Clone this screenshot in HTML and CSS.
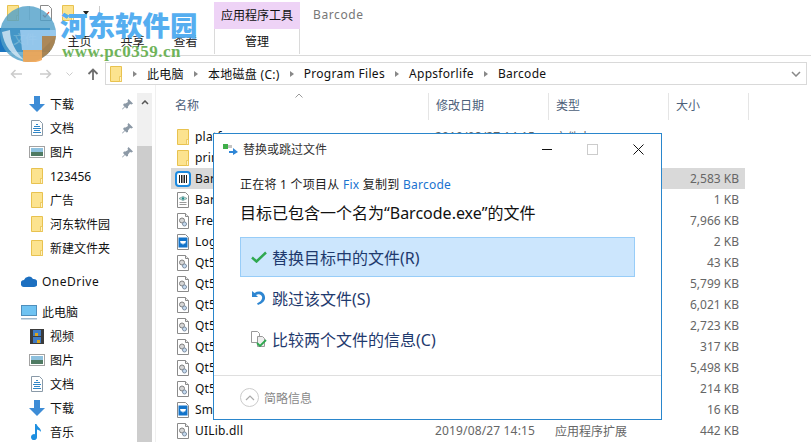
FILE: index.html
```html
<!DOCTYPE html>
<html lang="zh-CN">
<head>
  <meta charset="UTF-8" />
  <title>Barcode</title>
  <link rel="stylesheet" href="styles.css">
</head>
<body>
  <svg width="0" height="0" class="defs">
    <symbol id="folder" viewBox="0 0 12 16">
      <path d="M.5.500h11v15H.5z" fill="#fce38f" stroke="#e8c24f"/>
      <path d="M9.500 15.500V10.500h2v5z" fill="#fff3c4" stroke="#e8c24f" stroke-width=".8"/>
    </symbol>
    <symbol id="dll" viewBox="0 0 12 16">
      <path d="M.5.500h8l3 3v12H.5z" fill="#fff" stroke="#8a8a8a"/>
      <path d="M8.500.500v3h3" fill="#eee" stroke="#8a8a8a"/>
      <circle cx="5" cy="7.500" r="2.500" fill="#d6d6d6" stroke="#808080"/>
      <circle cx="7.500" cy="11" r="2" fill="#c6dcf2" stroke="#7d8da0"/>
    </symbol>
    <symbol id="pic" viewBox="0 0 12 16">
      <path d="M.5.500h8l3 3v12H.5z" fill="#fff" stroke="#8a8a8a"/>
      <rect x="1.500" y="3.500" width="9" height="10" fill="#1273c9"/>
      <path d="M3 7h6l-1 3-1-1-1 2-1-2-1 1z" fill="#fff"/>
    </symbol>
    <symbol id="cfg" viewBox="0 0 12 16">
      <path d="M.5.500h8l3 3v12H.5z" fill="#fff" stroke="#8a8a8a"/>
      <path d="M2 6.500l4-2 4 2-4 2z" fill="#d5e8e5" stroke="#5c8f8c" stroke-width=".7"/>
      <circle cx="6" cy="6.500" r="1.200" fill="#1f8a88"/>
      <path d="M2.500 10.500h7M2.500 12.500h7" stroke="#9a9a9a"/>
    </symbol>
    <symbol id="down" viewBox="0 0 16 16">
      <path d="M5 0h6v8h5l-8 8-8-8h5z" fill="#3d8cd6"/>
    </symbol>
    <symbol id="doc" viewBox="0 0 12 16">
      <path d="M.5.500h8l3 3v12H.5z" fill="#fff" stroke="#8a9aa8"/>
      <path d="M5 4.500h2M3 6.500h6M2 8.500h8M3 10.500h6M2 12.500h8" stroke="#2f86c8"/>
    </symbol>
    <symbol id="image" viewBox="0 0 16 12">
      <rect x=".5" y=".5" width="15" height="11" fill="#fff" stroke="#a2a2a2"/>
      <rect x="2" y="2" width="12" height="4" fill="#8ec1de"/>
      <rect x="2" y="6" width="12" height="4" fill="#4f7a62"/>
    </symbol>
    <symbol id="pin" viewBox="0 0 11 11">
      <path d="M6.500 0L11 4.500 9.500 5.500 8 5 6 7.500 6 9 4.500 9.500 3 8 .5 10.500 0 10 2.500 7.500 1 6 2 4.500 3.500 4.500 6 3 5.500 1.500z" fill="#8c99a6"/>
    </symbol>
  </svg>

  <div class="ribbon">
    <div class="quick">
      <svg width="12" height="16"><use href="#folder"/></svg>
      <span class="q-sep"></span>
      <svg width="12" height="16" viewBox="0 0 12 16"><path d="M.5.500h8l3 3v12H.5z" fill="#fff" stroke="#8a8a8a"/><path d="M3 10l2 2 4-5" fill="none" stroke="#d8503c" stroke-width="1.200"/></svg>
      <svg width="12" height="16"><use href="#folder"/></svg>
      <span class="q-caret"></span>
      <span class="q-sep"></span>
    </div>
    <div class="tabs">
      <div class="tab tab-file">文件</div>
      <div class="tab">主页</div>
      <div class="tab">共享</div>
      <div class="tab">查看</div>
      <div class="tool-group">
        <div class="tool-title">应用程序工具</div>
        <div class="tool-tab">管理</div>
      </div>
      <div class="window-title">Barcode</div>
    </div>
  </div>

  <div class="address-row">
    <div class="nav-buttons">
      <svg width="12" height="10" viewBox="0 0 12 10"><path d="M12 5H1.500M5.500 1L1.500 5l4 4" fill="none" stroke="#cbcbcb" stroke-width="1.500"/></svg>
      <svg width="12" height="10" viewBox="0 0 12 10"><path d="M0 5h10.500M6.500 1l4 4-4 4" fill="none" stroke="#cbcbcb" stroke-width="1.500"/></svg>
      <svg width="7" height="4" viewBox="0 0 7 4"><path d="M.5.500l3 3 3-3" fill="none" stroke="#cbcbcb"/></svg>
      <svg width="12" height="12" viewBox="0 0 12 12"><path d="M6 12V1.500M1.500 6L6 1.500 10.500 6" fill="none" stroke="#6e6e6e" stroke-width="1.800"/></svg>
    </div>
    <div class="address">
      <svg width="12" height="16"><use href="#folder"/></svg>
      <span class="crumb-sep first"></span><span class="crumb">此电脑</span>
      <span class="crumb-sep"></span><span class="crumb">本地磁盘 (C:)</span>
      <span class="crumb-sep"></span><span class="crumb">Program Files</span>
      <span class="crumb-sep"></span><span class="crumb">Appsforlife</span>
      <span class="crumb-sep"></span><span class="crumb">Barcode</span>
      <svg class="address-drop" width="10" height="6" viewBox="0 0 10 6"><path d="M1 1l4 4 4-4" fill="none" stroke="#888" stroke-width="1.500"/></svg>
    </div>
  </div>

  <div class="main">
    <nav class="sidebar">
      <div class="nav-list">
        <div class="nav-item"><span class="nav-ico"><svg width="16" height="16"><use href="#down"/></svg></span><span>下载</span><svg class="pin" width="11" height="11"><use href="#pin"/></svg></div>
        <div class="nav-item"><span class="nav-ico"><svg width="12" height="16"><use href="#doc"/></svg></span><span>文档</span><svg class="pin" width="11" height="11"><use href="#pin"/></svg></div>
        <div class="nav-item"><span class="nav-ico"><svg width="16" height="12"><use href="#image"/></svg></span><span>图片</span><svg class="pin" width="11" height="11"><use href="#pin"/></svg></div>
        <div class="nav-item"><span class="nav-ico"><svg width="12" height="16"><use href="#folder"/></svg></span><span>123456</span></div>
        <div class="nav-item"><span class="nav-ico"><svg width="12" height="16"><use href="#folder"/></svg></span><span>广告</span></div>
        <div class="nav-item"><span class="nav-ico"><svg width="12" height="16"><use href="#folder"/></svg></span><span>河东软件园</span></div>
        <div class="nav-item"><span class="nav-ico"><svg width="12" height="16"><use href="#folder"/></svg></span><span>新建文件夹</span></div>
        <div class="nav-item nav-top nav-drive">
          <span class="nav-ico"><svg width="16" height="11" viewBox="0 0 16 11"><path d="M3.500 11A3.500 3.500 0 0 1 3 4a5 5 0 0 1 9-1 4 4 0 0 1 1 8z" fill="#1c6fc0"/></svg></span>
          <span>OneDrive</span>
        </div>
        <div class="nav-item nav-top nav-pc">
          <span class="nav-ico"><svg width="16" height="15" viewBox="0 0 16 15"><rect x=".5" y=".5" width="15" height="10" fill="#6fc3f2" stroke="#4f8fbc"/><path d="M0 13h16v1.500H0z" fill="#9fb8cc"/></svg></span>
          <span>此电脑</span>
        </div>
        <div class="nav-item"><span class="nav-ico"><svg width="14" height="15" viewBox="0 0 14 15"><rect width="14" height="15" fill="#3b3b3b"/><rect x="3" y="1" width="8" height="6" fill="#3f7bc4"/><rect x="3" y="8" width="8" height="6" fill="#3f7bc4"/><path d="M5 4h3v3H5zM7 11h3v3H7z" fill="#d9a520"/></svg></span><span>视频</span></div>
        <div class="nav-item"><span class="nav-ico"><svg width="16" height="12"><use href="#image"/></svg></span><span>图片</span></div>
        <div class="nav-item"><span class="nav-ico"><svg width="12" height="16"><use href="#doc"/></svg></span><span>文档</span></div>
        <div class="nav-item"><span class="nav-ico"><svg width="16" height="16"><use href="#down"/></svg></span><span>下载</span></div>
        <div class="nav-item"><span class="nav-ico"><svg width="12" height="16" viewBox="0 0 12 16"><path d="M4 0h1.500c.5 3 5 4 4.500 8-1-1.500-2-2-4-2.500V13a3 3 0 1 1-2-2.700z" fill="#1e8fe0"/></svg></span><span>音乐</span></div>
      </div>
      <div class="scrollbar">
        <div class="scroll-up"><svg width="8" height="5" viewBox="0 0 8 5"><path d="M1 4l3-3 3 3" fill="none" stroke="#555" stroke-width="1.500"/></svg></div>
        <div class="scroll-thumb"></div>
      </div>
    </nav>

    <section class="files">
      <div class="sort-mark"><svg width="8" height="5" viewBox="0 0 8 5"><path d="M.5 4.500L4 1l3.500 3.500" fill="none" stroke="#9a9a9a"/></svg></div>
      <div class="file-head">
        <div class="col col-name">名称</div>
        <div class="col col-date">修改日期</div>
        <div class="col col-type">类型</div>
        <div class="col col-size">大小</div>
      </div>
      <div class="file-list">
        <div class="file"><svg class="file-ico" width="12" height="16"><use href="#folder"/></svg><span class="f-name">platforms</span><span class="f-date">2019/08/27 14:15</span><span class="f-type">文件夹</span><span class="f-size"></span></div>
        <div class="file"><svg class="file-ico" width="12" height="16"><use href="#folder"/></svg><span class="f-name">printsupport</span><span class="f-date"></span><span class="f-type"></span><span class="f-size"></span></div>
        <div class="file selected"><svg class="file-ico" width="16" height="16" viewBox="0 0 16 16"><rect x="1" y="1" width="14" height="14" rx="3" fill="#fff" stroke="#1b8ae0" stroke-width="2"/><path d="M4.500 4v8M6.500 4v8M8 4v8M9.500 4v8M11.500 4v8" stroke="#222"/></svg><span class="f-name">Barcode.exe</span><span class="f-date"></span><span class="f-type"></span><span class="f-size">2,583 KB</span></div>
        <div class="file"><svg class="file-ico" width="12" height="16"><use href="#cfg"/></svg><span class="f-name">Barcode.ini</span><span class="f-date"></span><span class="f-type"></span><span class="f-size">1 KB</span></div>
        <div class="file"><svg class="file-ico" width="12" height="16"><use href="#dll"/></svg><span class="f-name">FreeImage.dll</span><span class="f-date"></span><span class="f-type"></span><span class="f-size">7,966 KB</span></div>
        <div class="file"><svg class="file-ico" width="12" height="16"><use href="#pic"/></svg><span class="f-name">Logo.ico</span><span class="f-date"></span><span class="f-type"></span><span class="f-size">2 KB</span></div>
        <div class="file"><svg class="file-ico" width="12" height="16"><use href="#dll"/></svg><span class="f-name">Qt5Core.dll</span><span class="f-date"></span><span class="f-type"></span><span class="f-size">43 KB</span></div>
        <div class="file"><svg class="file-ico" width="12" height="16"><use href="#dll"/></svg><span class="f-name">Qt5Gui.dll</span><span class="f-date"></span><span class="f-type"></span><span class="f-size">5,799 KB</span></div>
        <div class="file"><svg class="file-ico" width="12" height="16"><use href="#dll"/></svg><span class="f-name">Qt5Net.dll</span><span class="f-date"></span><span class="f-type"></span><span class="f-size">6,021 KB</span></div>
        <div class="file"><svg class="file-ico" width="12" height="16"><use href="#dll"/></svg><span class="f-name">Qt5Pdf.dll</span><span class="f-date"></span><span class="f-type"></span><span class="f-size">2,723 KB</span></div>
        <div class="file"><svg class="file-ico" width="12" height="16"><use href="#dll"/></svg><span class="f-name">Qt5Svg.dll</span><span class="f-date"></span><span class="f-type"></span><span class="f-size">317 KB</span></div>
        <div class="file"><svg class="file-ico" width="12" height="16"><use href="#dll"/></svg><span class="f-name">Qt5Wid.dll</span><span class="f-date"></span><span class="f-type"></span><span class="f-size">5,498 KB</span></div>
        <div class="file"><svg class="file-ico" width="12" height="16"><use href="#dll"/></svg><span class="f-name">Qt5Xml.dll</span><span class="f-date"></span><span class="f-type"></span><span class="f-size">214 KB</span></div>
        <div class="file"><svg class="file-ico" width="12" height="16"><use href="#pic"/></svg><span class="f-name">Small.ico</span><span class="f-date"></span><span class="f-type"></span><span class="f-size">16 KB</span></div>
        <div class="file"><svg class="file-ico" width="12" height="16"><use href="#dll"/></svg><span class="f-name">UILib.dll</span><span class="f-date">2019/08/27 14:15</span><span class="f-type">应用程序扩展</span><span class="f-size">442 KB</span></div>
      </div>
    </section>
  </div>

  <!-- Replace dialog -->
  <div class="dialog">
    <div class="dialog-title">
      <svg class="dialog-ico" width="15" height="12" viewBox="0 0 15 12"><rect y="1" width="5" height="5" fill="#3fae49"/><rect x="5" y="2" width="4" height="3" fill="#c4c4c4"/><path d="M6 8h4V5l5 4-5 3v-2H6z" fill="#2f86d6"/></svg>
      <span class="dialog-caption">替换或跳过文件</span>
      <div class="win-buttons">
        <span class="win-min"></span>
        <span class="win-max"></span>
        <svg width="11" height="11" viewBox="0 0 11 11"><path d="M.5.5l10 10M10.500.5l-10 10" stroke="#111"/></svg>
      </div>
    </div>
    <div class="dialog-body">
      <p class="status">正在将 1 个项目从 <a>Fix</a> 复制到 <a>Barcode</a></p>
      <p class="headline">目标已包含一个名为“Barcode.exe”的文件</p>
      <div class="choice active">
        <svg width="16" height="12" viewBox="0 0 16 12"><path d="M1 6.500l4.500 4L15 1.500" fill="none" stroke="#2fa84f" stroke-width="2.500"/></svg>
        <span>替换目标中的文件(R)</span>
      </div>
      <div class="choice">
        <svg width="16" height="16" viewBox="0 0 16 16"><path d="M1 1v6h6L5 5c3-2 7 0 6 3.500-.5 2-2 3.500-5 5l1 1.500c5-1.500 7.500-4.500 7-8C13.500 2 8 0 3.500 3z" fill="#2e86d1"/></svg>
        <span>跳过该文件(S)</span>
      </div>
      <div class="choice">
        <svg width="16" height="16" viewBox="0 0 16 16"><path d="M.5.500h6l2 2v9h-8z" fill="#fff" stroke="#999"/><path d="M6.500 5.500h5l2 2v8h-7z" fill="#eee" stroke="#999"/><path d="M6 12l3 3 6-6" fill="none" stroke="#2fa84f" stroke-width="1.800"/></svg>
        <span>比较两个文件的信息(C)</span>
      </div>
    </div>
    <div class="dialog-foot">
      <span class="more-btn"><svg width="10" height="6" viewBox="0 0 10 6"><path d="M1 5l4-4 4 4" fill="none" stroke="#aaa" stroke-width="1.200"/></svg></span>
      <span>简略信息</span>
    </div>
  </div>

  <!-- Site watermark -->
  <div class="watermark">
    <svg class="wm-logo" width="56" height="56" viewBox="0 0 56 56">
      <circle cx="28" cy="28" r="28" fill="#4f9fc8" opacity=".8"/>
      <path d="M20 24H56V30L42 44H22z" fill="#9ccbee" opacity=".9"/>
      <path d="M2 26c2 14 10 24 22 28-8-8-14-18-14-30z" fill="#d7e8f5" opacity=".8"/>
      <path d="M23 44H42V54A28 28 0 0 1 23 55.500z" fill="#f3a552" opacity=".9"/>
      <path d="M42 30H56A28 28 0 0 1 42 52z" fill="#b07d3e" opacity=".85"/>
    </svg>
    <div class="wm-name">河东软件园</div>
    <div class="wm-url">www.pc0359.cn</div>
  </div>
</body>
</html>
```

FILE: styles.css
```css
html, body {
  margin: 0;
  padding: 0;
  width: 811px;
  height: 442px;
  overflow: hidden;
  background: #fff;
  color: #111;
  font-family: "Noto Sans", "Noto Sans CJK SC", sans-serif;
  font-size: 12px;
}

svg {
  display: block;
  flex: none;
}

.defs {
  position: absolute;
}

/* Ribbon */
.ribbon {
  height: 56px;
  box-sizing: border-box;
  border-bottom: 1px solid #dadada;
  position: relative;
}

.quick {
  display: flex;
  align-items: center;
  height: 26px;
  padding-left: 7px;
  gap: 10px;
}

.q-sep {
  width: 1px;
  height: 14px;
  background: #ccc;
}

.q-caret {
  width: 0;
  height: 0;
  margin-left: -1px;
  border-left: 3.500px solid transparent;
  border-right: 3.500px solid transparent;
  border-top: 4px solid #222;
}

.tabs {
  display: flex;
  position: absolute;
  left: 0;
  top: 0;
  right: 0;
  height: 55px;
  align-items: flex-end;
}

.tab {
  width: 53px;
  height: 26px;
  line-height: 26px;
  text-align: center;
  color: #222;
}

.tab-file {
  width: 50px;
  height: 24px;
  line-height: 24px;
  margin-right: 3px;
  margin-bottom: 3px;
  background: #1b75c0;
  color: #fff;
}

.tool-group {
  margin-left: 2px;
  width: 86px;
  height: 46px;
  display: flex;
  flex-direction: column;
  align-self: flex-start;
  margin-top: 2px;
}

.tool-title {
  height: 27px;
  line-height: 27px;
  text-align: center;
  background: #eed3f6;
}

.tool-tab {
  flex: 1;
  line-height: 25px;
  text-align: center;
  border-left: 1px solid #dadada;
  border-right: 1px solid #dadada;
}

.window-title {
  align-self: flex-start;
  margin: 6px 0 0 13px;
  color: #777;
  letter-spacing: .6px;
}

/* Address bar */
.address-row {
  display: flex;
  height: 23px;
  margin-top: 6px;
}

.nav-buttons {
  display: flex;
  align-items: center;
  width: 105px;
  padding-left: 10px;
  box-sizing: border-box;
}

.nav-buttons svg:nth-child(1) {
  margin-right: 18px;
}

.nav-buttons svg:nth-child(2) {
  margin-right: 14px;
}

.nav-buttons svg:nth-child(3) {
  margin-right: 14px;
}

.address {
  flex: 1;
  margin-right: 4px;
  border: 1px solid #d9d9d9;
  display: flex;
  align-items: center;
  padding-left: 4px;
  position: relative;
  letter-spacing: .3px;
}

.crumb {
  color: #111;
}

.crumb-sep {
  width: 0;
  height: 0;
  margin: 0 10px 0 10px;
  border: 3px solid transparent;
  border-left: 4px solid #888;
  border-right: 0;
}

.crumb-sep.first {
  margin-left: 11px;
}

.address-drop {
  position: absolute;
  right: 5px;
  top: 8px;
}

/* Main area */
.main {
  display: flex;
  height: 357px;
}

.sidebar {
  width: 156px;
  display: flex;
  flex: none;
  border-right: 1px solid #f0f0f0;
  box-sizing: border-box;
  padding-right: 3px;
}

.nav-list {
  width: 137px;
  flex: none;
  padding-top: 7px;
}

.nav-item {
  height: 24px;
  display: flex;
  align-items: center;
  padding-left: 29px;
  position: relative;
  white-space: nowrap;
}

.nav-ico {
  width: 16px;
  margin-right: 5px;
  display: flex;
  justify-content: center;
  flex: none;
}

.nav-top {
  padding-left: 21px;
}

.nav-drive {
  margin-top: 10px;
  height: 23px;
  letter-spacing: .5px;
}

.nav-pc {
  margin-top: 7px;
}

.pin {
  position: absolute;
  left: 122px;
  top: 7px;
}

.scrollbar {
  width: 15px;
  flex: none;
  margin-top: 8px;
  background: #f0f0f0;
  display: flex;
  flex-direction: column;
}

.scroll-up {
  height: 53px;
  padding: 7px 0 0 4px;
  box-sizing: border-box;
}

.scroll-thumb {
  flex: 1;
  background: #cdcdcd;
}

/* File list */
.files {
  flex: 1;
  position: relative;
}

.sort-mark {
  position: absolute;
  left: 139px;
  top: 8px;
}

.file-head {
  display: flex;
  height: 27px;
  margin-top: 8px;
  color: #4c607a;
}

.col {
  box-sizing: border-box;
  padding-left: 7px;
  line-height: 26px;
  border-right: 1px solid #e5e5e5;
}

.col-name {
  width: 273px;
  padding-left: 19px;
}

.col-date,
.col-type {
  width: 120px;
}

.col-size {
  width: 80px;
}

.file-list {
  margin-top: 6px;
}

.file {
  display: flex;
  align-items: center;
  height: 21px;
  width: 574px;
  margin-left: 15px;
  padding-left: 6px;
  box-sizing: border-box;
  color: #666;
  white-space: nowrap;
}

.file.selected {
  background: #d9d9d9;
  padding-left: 4px;
}

.file-ico {
  margin-right: 6px;
}

.file.selected .file-ico {
  margin-right: 4px;
}

.f-name {
  width: 240px;
  color: #111;
  overflow: hidden;
  letter-spacing: .2px;
}

.f-date {
  width: 120px;
  letter-spacing: .15px;
}

.f-type {
  width: 108px;
}

.f-size {
  width: 76px;
  text-align: right;
}

/* Dialog */
.dialog {
  position: absolute;
  left: 213px;
  top: 133px;
  width: 449px;
  height: 287px;
  box-sizing: border-box;
  background: #fff;
  border: 1px solid #2a86cc;
  display: flex;
  flex-direction: column;
}

.dialog-title {
  display: flex;
  align-items: center;
  height: 30px;
  padding-left: 9px;
  gap: 5px;
}

.dialog-caption {
  flex: 1;
  color: #333;
}

.win-buttons {
  display: flex;
  align-items: center;
  gap: 35px;
  padding-right: 17px;
}

.win-min {
  width: 10px;
  height: 1px;
  background: #111;
}

.win-max {
  width: 9px;
  height: 9px;
  border: 1px solid #ccc;
}

.dialog-body {
  flex: 1;
  padding: 12px 26px 0;
}

.status {
  margin: 0;
  line-height: 18px;
  color: #222;
  letter-spacing: .25px;
}

.status a {
  color: #1a73d0;
}

.headline {
  margin: 8px 0 13px;
  font-size: 16px;
  line-height: 22px;
  color: #111;
  white-space: nowrap;
}

.choice {
  display: flex;
  align-items: center;
  gap: 5px;
  height: 40px;
  margin-bottom: 1px;
  box-sizing: border-box;
  padding-left: 10px;
  border: 1px solid transparent;
  font-size: 16px;
  color: #1f3a6e;
}

.choice.active {
  background: #cce6fd;
  border-color: #98cdf8;
}

.dialog-foot {
  height: 44px;
  box-sizing: border-box;
  border-top: 1px solid #dfdfdf;
  display: flex;
  align-items: center;
  gap: 5px;
  padding-left: 26px;
  color: #888;
}

.more-btn {
  width: 17px;
  height: 17px;
  border: 1px solid #ccc;
  border-radius: 50%;
  display: flex;
  align-items: center;
  justify-content: center;
}

/* Watermark sits over the ribbon */
.watermark {
  position: absolute;
  left: 0;
  top: 0;
  width: 210px;
  height: 64px;
}

.wm-logo {
  position: absolute;
  left: 0;
  top: 6px;
}

.wm-name {
  position: absolute;
  left: 60px;
  top: 6px;
  font-family: "Noto Sans CJK SC", sans-serif;
  font-size: 27.500px;
  font-weight: 900;
  line-height: 36px;
  color: #55aef0;
  white-space: nowrap;
}

.wm-url {
  position: absolute;
  left: 62px;
  top: 42px;
  font-family: "Liberation Serif", serif;
  font-size: 17px;
  font-weight: bold;
  line-height: 20px;
  color: #6fb35a;
  letter-spacing: .5px;
  white-space: nowrap;
}
```
